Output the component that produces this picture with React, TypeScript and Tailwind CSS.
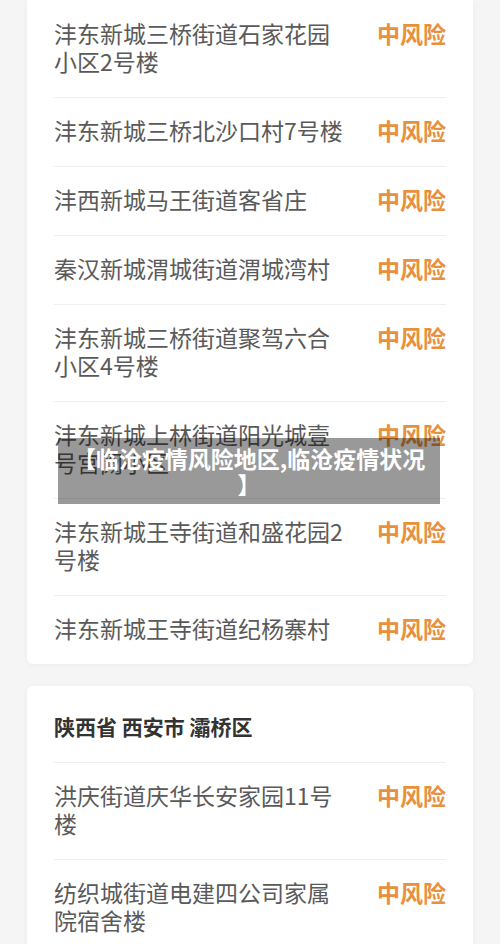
import React from "react";

type Row = { lines: string[] };

const card1: Row[] = [
  { lines: ["沣东新城三桥街道石家花园", "小区2号楼"] },
  { lines: ["沣东新城三桥北沙口村7号楼"] },
  { lines: ["沣西新城马王街道客省庄"] },
  { lines: ["秦汉新城渭城街道渭城湾村"] },
  { lines: ["沣东新城三桥街道聚驾六合", "小区4号楼"] },
  { lines: ["沣东新城上林街道阳光城壹", "号宫阙小区"] },
  { lines: ["沣东新城王寺街道和盛花园2", "号楼"] },
  { lines: ["沣东新城王寺街道纪杨寨村"] },
];

const card2: Row[] = [
  { lines: ["洪庆街道庆华长安家园11号", "楼"] },
  { lines: ["纺织城街道电建四公司家属", "院宿舍楼"] },
];

const font = {
  fontFamily: '"Noto Sans CJK SC", "Noto Sans", sans-serif',
};

function RowItem({ row, last }: { row: Row; last: boolean }) {
  return (
    <div className={last ? "" : "border-b border-[#efefef]"}>
      <div className="flex items-start justify-between pt-[18px] pb-[22px]">
        <div className="text-[23px] leading-[28px] text-[#5a5a5a]">
          {row.lines.map((l, i) => (
            <div key={i}>{l}</div>
          ))}
        </div>
        <div className="shrink-0 text-[23px] leading-[28px] font-bold text-[#e8903c]">
          中风险
        </div>
      </div>
    </div>
  );
}

export default function App() {
  return (
    <div
      className="relative min-h-[944px] w-[500px] overflow-hidden bg-[#f5f5f5]"
      style={font}
    >
      <div className="flex flex-col gap-[22px] px-[27px]">
        <div className="rounded-b-md bg-white px-[27px] pt-px shadow-[0_1px_6px_rgba(0,0,0,0.04)]">
          {card1.map((r, i) => (
            <RowItem key={i} row={r} last={i === card1.length - 1} />
          ))}
        </div>
        <div className="rounded-md bg-white px-[27px] shadow-[0_1px_6px_rgba(0,0,0,0.04)]">
          <div className="border-b border-[#efefef] pt-[26px] pb-[22px] text-[21px] leading-[28px] font-bold text-[#333333]">
            陕西省 西安市 灞桥区
          </div>
          {card2.map((r, i) => (
            <RowItem key={i} row={r} last={i === card2.length - 1} />
          ))}
        </div>
      </div>
      <div className="absolute left-[58px] top-[438px] w-[382px] bg-[rgba(0,0,0,0.4)] px-3 py-[7px] text-center text-[23px] leading-[26px] font-bold text-white">
        【临沧疫情风险地区,临沧疫情状况
        <br />】
      </div>
    </div>
  );
}
